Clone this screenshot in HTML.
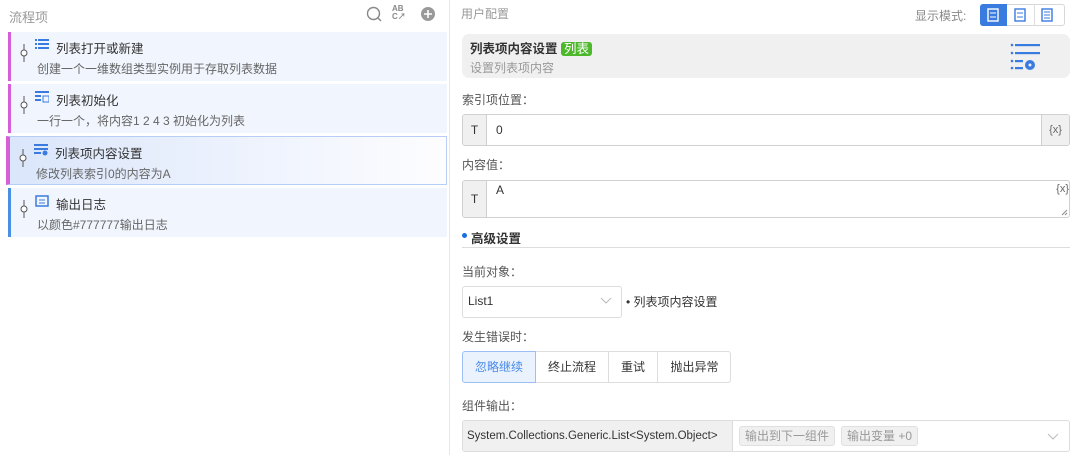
<!DOCTYPE html>
<html><head><meta charset="utf-8"><style>
*{box-sizing:border-box;margin:0;padding:0}
body{width:1075px;height:455px;overflow:hidden;background:#fff;font-family:"Liberation Sans","Noto Sans CJK SC",sans-serif;font-size:12px;color:#333;position:relative}
.abs{position:absolute}
.card{position:absolute;left:8px;width:439px;height:49px;background:#f1f5fd;border-left:3px solid #d55fd8}
.card .t{position:absolute;left:45px;top:6px;font-size:12.5px;color:#333}
.card .d{position:absolute;left:26px;top:28px;color:#666;font-size:12px}
.card .pin{position:absolute;left:9px;top:12px;width:8px;height:18px}
.card .ic{position:absolute;left:24px;top:7px}
.lbl{position:absolute;left:462px;color:#555;font-size:12px}
</style></head><body>
<div class="abs" style="left:449px;top:0;width:1px;height:455px;background:#e8e8e8"></div>
<div class="abs" style="left:9px;top:7px;color:#999;font-size:13px">流程项</div>
<svg class="abs" style="left:366px;top:6px" width="16" height="16"><circle cx="7.5" cy="7.5" r="6" fill="none" stroke="#888" stroke-width="1.4"/><line x1="12" y1="12" x2="15" y2="15" stroke="#888" stroke-width="1.4"/></svg>
<div class="abs" style="left:392px;top:5px;font-size:8px;color:#888;font-weight:bold;line-height:8px">AB<br>C↗</div>
<svg class="abs" style="left:420px;top:6px" width="16" height="16"><circle cx="8" cy="8" r="7" fill="#999"/><path d="M8 4v8M4 8h8" stroke="#fff" stroke-width="1.6"/></svg>

<div class="card" style="top:32px"><svg class="pin" viewBox="0 0 8 18"><line x1="4" y1="0" x2="4" y2="18" stroke="#555"/><circle cx="4" cy="9" r="3" fill="#fff" stroke="#555"/></svg>
<svg class="ic" width="14" height="12"><g fill="#3a7be0"><rect x="0" y="0" width="2" height="2"/><rect x="3" y="0" width="11" height="2"/><rect x="0" y="4" width="2" height="2"/><rect x="3" y="4" width="11" height="2"/><rect x="0" y="8" width="2" height="2"/><rect x="3" y="8" width="11" height="2"/></g></svg>
<div class="t">列表打开或新建</div><div class="d">创建一个一维数组类型实例用于存取列表数据</div></div>
<div class="card" style="top:84px"><svg class="pin" viewBox="0 0 8 18"><line x1="4" y1="0" x2="4" y2="18" stroke="#555"/><circle cx="4" cy="9" r="3" fill="#fff" stroke="#555"/></svg>
<svg class="ic" width="14" height="12"><g fill="#3a7be0"><rect x="0" y="0" width="14" height="2"/><rect x="0" y="4" width="6" height="2"/><rect x="0" y="8" width="6" height="2"/><rect x="8" y="5" width="6" height="6" fill="none" stroke="#3a7be0"/></g></svg>
<div class="t">列表初始化</div><div class="d">一行一个，将内容1 2 4 3 初始化为列表</div></div>
<div class="card" style="top:136px;background:linear-gradient(90deg,#dbe6fb,#fdfdff);border:1px solid #b8cdf5;border-left:4px solid #d55fd8;left:6px;width:441px"><svg class="pin" viewBox="0 0 8 18"><line x1="4" y1="0" x2="4" y2="18" stroke="#555"/><circle cx="4" cy="9" r="3" fill="#fff" stroke="#555"/></svg>
<svg class="ic" width="14" height="12"><g fill="#3a7be0"><rect x="0" y="0" width="14" height="2"/><rect x="0" y="4" width="14" height="2"/><rect x="0" y="8" width="7" height="2"/><circle cx="11" cy="9" r="2.5"/></g></svg>
<div class="t">列表项内容设置</div><div class="d">修改列表索引0的内容为A</div></div>
<div class="card" style="top:188px;border-left-color:#4a90e2"><svg class="pin" viewBox="0 0 8 18"><line x1="4" y1="0" x2="4" y2="18" stroke="#555"/><circle cx="4" cy="9" r="3" fill="#fff" stroke="#555"/></svg>
<svg class="ic" width="14" height="14"><rect x="1" y="1" width="12" height="10" fill="none" stroke="#3a7be0" stroke-width="1.5"/><path d="M4 5h6M4 8h6" stroke="#3a7be0"/></svg>
<div class="t">输出日志</div><div class="d">以颜色#777777输出日志</div></div>

<div class="abs" style="left:461px;top:5px;color:#999">用户配置</div>
<div class="abs" style="left:915px;top:7px;color:#888">显示模式:</div>
<div class="abs" style="left:980px;top:4px;width:85px;height:22px;border:1px solid #d8d8d8;border-radius:3px"></div>
<div class="abs" style="left:980px;top:4px;width:27px;height:22px;background:#3a7be0;border-radius:3px 0 0 3px"></div>
<div class="abs" style="left:1034px;top:4px;width:1px;height:22px;background:#ddd"></div>
<svg class="abs" style="left:987px;top:8px" width="12" height="14"><rect x="1" y="1" width="10" height="12" fill="none" stroke="#fff" stroke-width="1.4"/><path d="M3 5h6M3 9h6" stroke="#fff"/></svg>
<svg class="abs" style="left:1014px;top:8px" width="12" height="14"><rect x="1" y="1" width="10" height="12" fill="none" stroke="#3a7be0" stroke-width="1.4"/><path d="M3 5h6M3 9h6" stroke="#3a7be0"/></svg>
<svg class="abs" style="left:1041px;top:8px" width="12" height="14"><rect x="1" y="1" width="10" height="12" fill="none" stroke="#3a7be0" stroke-width="1.4"/><path d="M3 4h6M3 7h6M3 10h6" stroke="#3a7be0"/></svg>

<div class="abs" style="left:462px;top:34px;width:608px;height:44px;background:#f0f0f0;border-radius:7px"></div>
<div class="abs" style="left:470px;top:38px;font-weight:bold;font-size:12.5px;color:#333">列表项内容设置 <span style="background:#4cb82a;color:#fff;font-weight:normal;padding:0 3px;border-radius:3px">列表</span></div>
<div class="abs" style="left:470px;top:59px;color:#999">设置列表项内容</div>
<svg class="abs" style="left:1010px;top:42px" width="32" height="32"><g fill="#3a7be0"><circle cx="2" cy="3" r="1.3"/><rect x="5" y="2" width="25" height="2.2"/><circle cx="2" cy="11" r="1.3"/><rect x="5" y="10" width="25" height="2.2"/><circle cx="2" cy="19" r="1.3"/><rect x="5" y="18" width="8" height="2.2"/><circle cx="2" cy="26" r="1.3"/><rect x="5" y="25" width="8" height="2.2"/><circle cx="20" cy="23" r="5"/></g><circle cx="20" cy="23" r="1.5" fill="#f0f0f0"/></svg>

<div class="lbl" style="top:91px">索引项位置：</div>
<div class="abs" style="left:462px;top:114px;width:608px;height:32px;border:1px solid #d0d0d0;border-radius:3px;overflow:hidden">
<div class="abs" style="left:0;top:0;width:24px;height:30px;background:#f0f0f0;border-right:1px solid #d0d0d0;text-align:center;line-height:30px">T</div>
<div class="abs" style="left:33px;top:8px">0</div>
<div class="abs" style="right:0;top:0;width:28px;height:30px;background:#f0f0f0;border-left:1px solid #d0d0d0;text-align:center;line-height:30px;font-size:11px;color:#666">{x}</div></div>
<div class="lbl" style="top:156px">内容值：</div>
<div class="abs" style="left:462px;top:180px;width:608px;height:38px;border:1px solid #d0d0d0;border-radius:3px;overflow:hidden">
<div class="abs" style="left:0;top:0;width:24px;height:36px;background:#f0f0f0;border-right:1px solid #d0d0d0;text-align:center;line-height:36px">T</div>
<div class="abs" style="left:33px;top:2px">A</div>
<div class="abs" style="right:0;top:2px;font-size:11px;color:#666">{x}</div>
<svg class="abs" style="right:1px;bottom:1px" width="7" height="7"><path d="M1 6L6 1M4 6L6 4" stroke="#888"/></svg></div>
<div class="abs" style="left:462px;top:233px;width:5px;height:5px;border-radius:50%;background:#1a6fe0"></div>
<div class="abs" style="left:471px;top:228px;font-weight:bold;font-size:12.5px">高级设置</div>
<div class="abs" style="left:462px;top:247px;width:608px;height:1px;background:#ddd"></div>

<div class="lbl" style="top:263px">当前对象：</div>
<div class="abs" style="left:462px;top:286px;width:160px;height:32px;border:1px solid #ddd;border-radius:3px"></div>
<div class="abs" style="left:468px;top:294px">List1</div>
<svg class="abs" style="left:600px;top:297px" width="12" height="8"><path d="M1 1l5 5 5-5" fill="none" stroke="#bbb"/></svg>
<div class="abs" style="left:626px;top:293px">• 列表项内容设置</div>

<div class="lbl" style="top:328px">发生错误时：</div>
<div class="abs" style="left:462px;top:351px;width:74px;height:32px;border:1px solid #9cc0f5;background:#eaf2fe;color:#4a8ae8;text-align:center;line-height:30px;border-radius:3px 0 0 3px">忽略继续</div>
<div class="abs" style="left:536px;top:351px;width:195px;height:32px;border:1px solid #ddd;border-left:none;border-radius:0 3px 3px 0"></div>
<div class="abs" style="left:536px;top:351px;width:73px;height:32px;border-right:1px solid #ddd;text-align:center;line-height:32px">终止流程</div>
<div class="abs" style="left:609px;top:351px;width:49px;height:32px;border-right:1px solid #ddd;text-align:center;line-height:32px">重试</div>
<div class="abs" style="left:658px;top:351px;width:73px;height:32px;text-align:center;line-height:32px">抛出异常</div>

<div class="lbl" style="top:397px">组件输出：</div>
<div class="abs" style="left:462px;top:420px;width:608px;height:32px;border:1px solid #ddd;border-radius:3px;overflow:hidden">
<div class="abs" style="left:0;top:0;width:270px;height:30px;background:#f0f0f0;border-right:1px solid #ddd;line-height:30px;padding-left:4px;font-size:11.5px">System.Collections.Generic.List&lt;System.Object&gt;</div>
<div class="abs" style="left:276px;top:5px;height:20px;padding:0 5px;background:#f0f0f0;border:1px solid #e0e0e0;border-radius:3px;color:#999;line-height:18px">输出到下一组件</div>
<div class="abs" style="left:378px;top:5px;height:20px;padding:0 5px;background:#f0f0f0;border:1px solid #e0e0e0;border-radius:3px;color:#999;line-height:18px">输出变量 +0</div>
<svg class="abs" style="left:584px;top:12px" width="12" height="8"><path d="M1 1l5 5 5-5" fill="none" stroke="#bbb"/></svg></div>
</body></html>
